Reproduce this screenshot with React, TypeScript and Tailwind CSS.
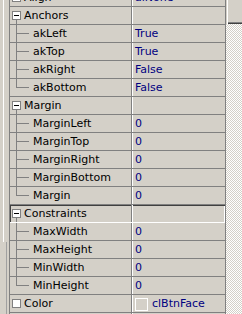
import React from 'react';

type Row = {
  name: string;
  value?: string;
  kind: 'parent' | 'child' | 'plain';
  last?: boolean;
  selected?: boolean;
  swatch?: boolean;
};

const rows: Row[] = [
  { name: 'Align', value: 'alNone', kind: 'plain' },
  { name: 'Anchors', kind: 'parent' },
  { name: 'akLeft', value: 'True', kind: 'child' },
  { name: 'akTop', value: 'True', kind: 'child' },
  { name: 'akRight', value: 'False', kind: 'child' },
  { name: 'akBottom', value: 'False', kind: 'child', last: true },
  { name: 'Margin', kind: 'parent' },
  { name: 'MarginLeft', value: '0', kind: 'child' },
  { name: 'MarginTop', value: '0', kind: 'child' },
  { name: 'MarginRight', value: '0', kind: 'child' },
  { name: 'MarginBottom', value: '0', kind: 'child' },
  { name: 'Margin', value: '0', kind: 'child', last: true },
  { name: 'Constraints', kind: 'parent', selected: true },
  { name: 'MaxWidth', value: '0', kind: 'child' },
  { name: 'MaxHeight', value: '0', kind: 'child' },
  { name: 'MinWidth', value: '0', kind: 'child' },
  { name: 'MinHeight', value: '0', kind: 'child', last: true },
  { name: 'Color', value: 'clBtnFace', kind: 'plain', swatch: true },
  { name: 'Cursor', value: 'crDefault', kind: 'plain' },
];

// expand box (+ optional tree line below it)
const ExpandBox = ({ open }: { open: boolean }) => (
  <svg width="14" height="17" className="shrink-0" shapeRendering="crispEdges">
    <rect x="2.5" y="4.5" width="8" height="8" fill="#fff" stroke="#808080" />
    {open && <line x1="4" y1="8.5" x2="9" y2="8.5" stroke="#000" />}
    {open && <line x1="6.5" y1="13" x2="6.5" y2="17" stroke="#808080" />}
  </svg>
);

const TreeLine = ({ last }: { last?: boolean }) => (
  <svg width="23" height="17" className="shrink-0" shapeRendering="crispEdges">
    <line x1="6.5" y1="0" x2="6.5" y2={last ? 9 : 17} stroke="#808080" />
    <line x1="6" y1="8.5" x2="19" y2="8.5" stroke="#808080" />
  </svg>
);

const PropRow = ({ row }: { row: Row }) => (
  <div
    className={
      row.selected
        ? 'flex h-[18px] border-b border-white shadow-[inset_1px_1px_0_#404040,inset_-1px_0_0_#fff]'
        : 'flex h-[18px] border-b border-[#808080]'
    }
  >
    <div className="flex w-[122px] shrink-0 items-start border-r border-[#808080] text-black">
      {row.kind === 'child' ? (
        <TreeLine last={row.last} />
      ) : (
        <ExpandBox open={row.kind === 'parent'} />
      )}
      <span className="leading-[18px] whitespace-nowrap">{row.name}</span>
    </div>
    <div className="flex flex-1 items-start border-l border-white pl-[2px] text-[#000080]">
      {row.swatch && (
        <span className="mt-[3px] mr-[4px] h-[13px] w-[13px] shrink-0 border border-white bg-[#d4d0c8]" />
      )}
      {row.value && <span className="leading-[18px] whitespace-nowrap">{row.value}</span>}
    </div>
  </div>
);

export default function App() {
  return (
    <div className="flex h-[314px] w-[242px] overflow-hidden bg-[#d4d0c8] font-['DejaVu_Sans',sans-serif] text-[11px]">
      <div className="flex w-[9px] shrink-0 flex-col">
        <div className="ml-[3px] h-[242px] w-px bg-white" />
        <div className="ml-[6px] w-px flex-1 bg-[#a0a0a0]" />
      </div>
      <div className="w-[217px] shrink-0 overflow-hidden border-x border-[#808080]">
        <div className="-mt-[11px]">
          {rows.map((r, i) => (
            <PropRow key={i} row={r} />
          ))}
        </div>
      </div>
      <div className="flex w-[16px] shrink-0 flex-col">
        <div className="h-[24px] bg-[#d4d0c8] shadow-[inset_1px_0_0_#d4d0c8,inset_2px_0_0_#fff,inset_0_-1px_0_#404040,inset_0_-2px_0_#808080]" />
        <div className="flex-1 bg-[repeating-conic-gradient(#ffffff_0%_25%,#d4d0c8_0%_50%)] bg-[length:2px_2px]" />
      </div>
    </div>
  );
}
